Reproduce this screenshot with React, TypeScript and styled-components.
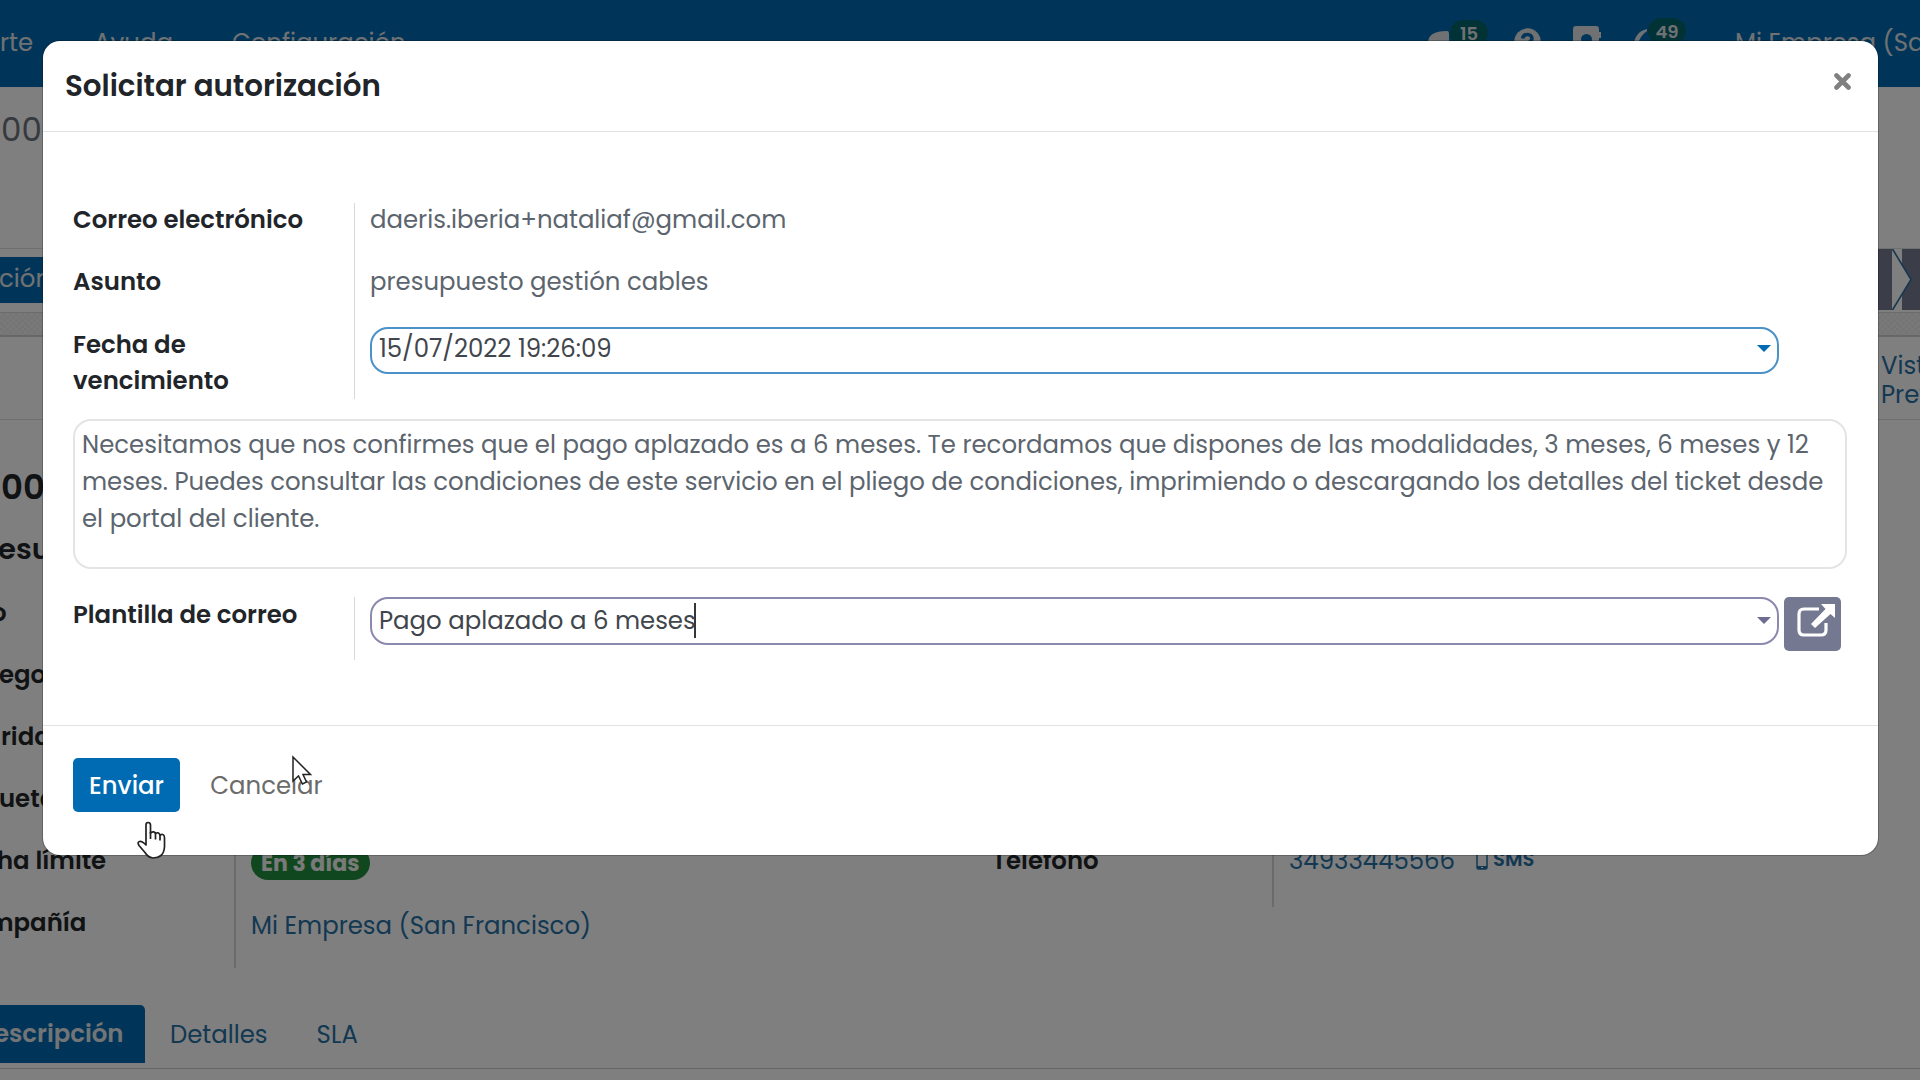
import React from "react";
import styled, { createGlobalStyle } from "styled-components";

const GlobalStyle = createGlobalStyle`
  * { box-sizing: border-box; }
  body {
    margin: 0;
    overflow: hidden;
    font-family: Poppins, Inter, "Open Sans", sans-serif;
    font-size: 24.4px;
    color: #212529;
  }
`;

const Screen = styled.div`
  position: relative;
  width: 1920px;
  height: 1080px;
  overflow: hidden;
  background: #fff;
`;

const Txt = styled.span<{ $ml?: number }>`
  margin-left: ${p => p.$ml ?? 0}px;
  white-space: nowrap;
`;

/* ---------- page behind the dialog ---------- */

const NavBar = styled.nav`
  display: flex;
  height: 87px;
  background: #006bb3;
  color: #e0e3e7;
  line-height: 86px;
`;
const NavMenu = styled.div`
  display: flex;
  flex: none;
  width: 1427px;
`;
const NavTools = styled.div`
  display: flex;
  align-items: flex-start;
  flex: none;
`;
const ToolIcon = styled.svg<{ $mt: number; $ml?: number }>`
  flex: none;
  margin-top: ${p => p.$mt}px;
  margin-left: ${p => p.$ml ?? 0}px;
`;
const Counter = styled.span<{ $mt: number; $ml: number }>`
  flex: none;
  width: 38px;
  height: 26px;
  margin-top: ${p => p.$mt}px;
  margin-left: ${p => p.$ml}px;
  border-radius: 13px;
  background: #00646c;
  font-size: 18px;
  font-weight: 600;
  line-height: 27px;
  text-align: center;
`;

const ControlPanel = styled.div`
  height: 162px;
  padding: 22px 0 0 1px;
  border-bottom: 1px solid #dcdfe2;
  font-size: 32.5px;
  line-height: 41px;
  color: #6c757d;
`;
const StatusRow = styled.div`
  display: flex;
  justify-content: space-between;
  height: 63px;
`;
const StatusButton = styled.div`
  width: 120px;
  height: 46px;
  margin-top: 8px;
  background: #006bb3;
  color: #e0e3e7;
  line-height: 43px;
`;
const Hatch = styled.div`
  height: 25px;
  border-top: 1px solid #d8d8d8;
  border-bottom: 2px solid #cfcfcf;
  background: repeating-conic-gradient(#ebebeb 0 25%, #f3f3f3 0 50%) 0 0 / 6px 6px;
`;
const PreviewStrip = styled.div`
  display: flex;
  justify-content: flex-end;
  height: 83px;
  padding-top: 14px;
  border-bottom: 1px solid #dcdfe2;
`;
const PreviewLink = styled.div`
  display: flex;
  flex-direction: column;
  width: 39px;
  overflow: hidden;
  color: #2670a4;
  line-height: 29px;
`;
const Sheet = styled.div`
  height: 585px;
`;
const RecordName = styled.div`
  height: 107px;
  padding: 46px 0 0 1px;
  font-size: 34px;
  font-weight: 600;
  line-height: 42px;
`;
const RecordTitle = styled.div`
  height: 55px;
  font-size: 29px;
  font-weight: 600;
  line-height: 44px;
`;
const Columns = styled.div`
  display: flex;
  align-items: flex-start;
`;
const FieldList = styled.div<{ $w: number; $pad?: number }>`
  width: ${p => p.$w}px;
  padding: 0 0 14px ${p => p.$pad ?? 0}px;
  font-weight: 600;
  line-height: 62px;
`;
const ValueList = styled.div<{ $w: number; $last?: number }>`
  display: flex;
  flex-direction: column;
  justify-content: flex-end;
  align-items: flex-start;
  width: ${p => p.$w}px;
  height: ${p => p.$last ?? 386}px;
  padding: 0 0 11px 15px;
  border-left: 2px solid #d4d6d8;
  color: #2670a4;
  line-height: 62px;
`;
const Row = styled.div`
  height: 62px;
`;
const Pill = styled.span`
  height: 34px;
  margin: 0 0 15px;
  padding: 0 10px;
  border-radius: 17px;
  background: #238f3e;
  color: #f4f4f4;
  font-size: 22px;
  font-weight: 700;
  line-height: 36px;
`;
const PhoneRow = styled.div`
  display: flex;
  align-items: center;
  height: 62px;
  margin-bottom: 4px;
`;
const Sms = styled.span`
  margin: -3px 0 0 5px;
  font-size: 19.5px;
  font-weight: 600;
`;
const Tabs = styled.div`
  display: flex;
  height: 64px;
  line-height: 60px;
  color: #2670a4;
  border-bottom: 1px solid #c9ccd0;
`;
const ActiveTab = styled.div`
  width: 145px;
  height: 58px;
  border-radius: 0 5px 0 0;
  background: #006bb3;
  color: #e6e9ec;
  font-weight: 600;
  line-height: 57px;
`;

/* ---------- dialog ---------- */

const Backdrop = styled.div`
  position: absolute;
  inset: 0;
  padding: 41px 42px 0 43px;
  background: rgba(0, 0, 0, 0.5);
`;
const Dialog = styled.section`
  height: 814px;
  border-radius: 17px;
  background: #fff;
  box-shadow: 0 0 0 1px rgba(0, 0, 0, 0.22);
`;
const DialogHeader = styled.header`
  display: flex;
  justify-content: space-between;
  height: 91px;
  padding: 26px 27px 0 22px;
  border-bottom: 1px solid #dfe1e4;
  font-size: 29.3px;
  font-weight: 600;
  line-height: 38px;
`;
const CloseIcon = styled.svg`
  margin-top: 6px;
`;
const DialogBody = styled.div`
  height: 593px;
  padding: 71px 31px 0 30px;
`;
const Group = styled.div<{ $h: number; $mt?: number }>`
  display: grid;
  grid-template-columns: 282px 1fr;
  height: ${p => p.$h}px;
  margin-top: ${p => p.$mt ?? 0}px;
`;
const Labels = styled.div`
  border-right: 1px solid #d5d8dc;
  font-weight: 600;
`;
const Values = styled.div`
  padding-left: 15px;
  color: #5c656e;
`;
const Line = styled.div<{ $h?: number; $gap?: number }>`
  height: ${p => p.$h ?? 34}px;
  margin-bottom: ${p => p.$gap ?? 28}px;
  line-height: ${p => p.$h ?? 34}px;
`;
const WrapLabel = styled.div`
  display: flex;
  flex-direction: column;
  line-height: 36px;
`;
const Field = styled.div<{ $color: string; $h: number; $lift?: number }>`
  display: flex;
  align-items: center;
  justify-content: space-between;
  width: 1409px;
  height: ${p => p.$h}px;
  padding: 0 6px ${p => p.$lift ?? 0}px 7px;
  border: 2px solid ${p => p.$color};
  border-radius: 18px;
  color: #41464c;
`;
const Triangle = styled.i<{ $color: string }>`
  border: 7px solid transparent;
  border-top: 7px solid ${p => p.$color};
  border-bottom: 0;
`;
const TextCaret = styled.i`
  width: 2px;
  height: 35px;
  margin-left: -2px;
  background: #33363a;
`;
const FieldText = styled.div`
  display: flex;
  align-items: center;
`;
const Message = styled.div`
  display: flex;
  flex-direction: column;
  height: 150px;
  margin-top: 20px;
  padding: 5px 7px 0;
  border: 2px solid #e3e4e6;
  border-radius: 18px;
  color: #5c656e;
  line-height: 37px;
`;
const SelectRow = styled.div`
  display: flex;
  gap: 5px;
`;
const OpenButton = styled.button`
  width: 57px;
  height: 54px;
  padding: 0;
  border: 0;
  border-radius: 5px;
  background: #747890;
`;
const DialogFooter = styled.footer`
  display: flex;
  height: 130px;
  padding: 32px 30px 0;
  border-top: 1px solid #dfe1e4;
`;
const Action = styled.button<{ $primary?: boolean }>`
  height: 54px;
  width: ${p => (p.$primary ? 107 : 145)}px;
  margin-left: ${p => (p.$primary ? 0 : 14)}px;
  padding: 0;
  border: 0;
  border-radius: 5px;
  background: ${p => (p.$primary ? "#006bb3" : "transparent")};
  color: ${p => (p.$primary ? "#fff" : "#6b6b6b")};
  font-family: inherit;
  font-size: 24.4px;
  font-weight: ${p => (p.$primary ? 500 : 400)};
  line-height: 51px;
`;
const Pointer = styled.svg<{ $x: number; $y: number }>`
  position: absolute;
  left: ${p => p.$x}px;
  top: ${p => p.$y}px;
`;

function Background() {
  return (
    <>
      <NavBar>
        <NavMenu>
          <Txt>rte</Txt>
          <Txt $ml={61}>Ayuda</Txt>
          <Txt $ml={59}>Configuración</Txt>
        </NavMenu>
        <NavTools>
          <ToolIcon $mt={31} $ml={1} width="21" height="20" viewBox="0 0 21 20">
            <path d="M0 12C0 4 6 0 19 0Q21 0 21 3V20H0Z" fill="#e0e3e7" />
          </ToolIcon>
          <Counter $mt={20} $ml={1}>15</Counter>
          <ToolIcon $mt={28} $ml={26} width="27" height="27" viewBox="0 0 27 27">
            <circle cx="13.5" cy="13.5" r="13.2" fill="#e0e3e7" />
            <path d="M8.7 10.5C9.5 5 18 5.300 18 10.500C18 14 13.500 13.500 13.500 17.500" fill="none" stroke="#006bb3" strokeWidth="3.600" />
          </ToolIcon>
          <ToolIcon $mt={26} $ml={32} width="29" height="30" viewBox="0 0 29 30">
            <path d="M3 0H23Q26 0 26 3V6H28V12H26V30H0V3Q0 0 3 0Z" fill="#e0e3e7" />
            <circle cx="13.500" cy="13.500" r="5.500" fill="#006bb3" />
          </ToolIcon>
          <ToolIcon $mt={29} $ml={32} width="15" height="26" viewBox="0 0 15 26">
            <path d="M13 0C4 2 0 9 0 16V26H4V15Q6 7 13 2Z" fill="#e0e3e7" />
          </ToolIcon>
          <Counter $mt={18} $ml={-1}>49</Counter>
          <Txt $ml={49}>Mi Empresa (San Francisco)</Txt>
        </NavTools>
      </NavBar>
      <ControlPanel>00</ControlPanel>
      <StatusRow>
        <StatusButton><Txt $ml={-1}>ción</Txt></StatusButton>
        <svg width="42" height="61" viewBox="0 0 42 61">
          <rect width="42" height="61" fill="#777b90" />
          <path d="M14 0H24V16L33 30.500L24 45V61H14Z" fill="#fff" />
          <path d="M14.500 0L33 30.500L14.500 61" fill="none" stroke="#2b6f9f" strokeWidth="1.600" />
        </svg>
      </StatusRow>
      <Hatch />
      <PreviewStrip>
        <PreviewLink><Txt>Vista</Txt><Txt>Previa</Txt></PreviewLink>
      </PreviewStrip>
      <Sheet>
        <RecordName>00</RecordName>
        <RecordTitle><Txt $ml={-2}>esu</Txt></RecordTitle>
        <Columns>
          <FieldList $w={234}>
            <Row><Txt $ml={-9}>o</Txt></Row>
            <Row><Txt $ml={-1}>ego</Txt></Row>
            <Row><Txt $ml={1}>rida</Txt></Row>
            <Row><Txt $ml={-1}>ueta</Txt></Row>
            <Row><Txt $ml={-3}>ha límite</Txt></Row>
            <Row><Txt $ml={-12}>mpañía</Txt></Row>
          </FieldList>
          <ValueList $w={743}>
            <Pill>En 3 días</Pill>
            <Row><Txt>Mi Empresa (San Francisco)</Txt></Row>
          </ValueList>
          <FieldList $w={295} $pad={15}>
            <Row /><Row /><Row /><Row />
            <Row><Txt>Teléfono</Txt></Row>
          </FieldList>
          <ValueList $w={500} $last={325}>
            <PhoneRow>
              <Txt>34933445566</Txt>
              <ToolIcon $mt={-2} $ml={21} width="12" height="20" viewBox="0 0 12 20">
                <rect x="1" y="1" width="10" height="18" rx="1.500" fill="none" stroke="#2670a4" strokeWidth="1.500" />
                <path d="M1 16H11V19H1Z" fill="#2670a4" />
                <path d="M5 17.500H7" stroke="#fff" />
              </ToolIcon>
              <Sms>SMS</Sms>
            </PhoneRow>
          </ValueList>
        </Columns>
      </Sheet>
      <Tabs>
        <ActiveTab><Txt $ml={-6}>escripción</Txt></ActiveTab>
        <Txt $ml={25}>Detalles</Txt>
        <Txt $ml={49}>SLA</Txt>
      </Tabs>
    </>
  );
}

export default function App() {
  return (
    <Screen>
      <GlobalStyle />
      <Background />
      <Backdrop>
        <Dialog>
          <DialogHeader>
            <Txt>Solicitar autorización</Txt>
            <CloseIcon width="17" height="17" viewBox="0 0 17 17">
              <path d="M2.500 2.500L14.500 14.500M14.500 2.500L2.500 14.500" stroke="#808080" strokeWidth="4.600" strokeLinecap="round" />
            </CloseIcon>
          </DialogHeader>
          <DialogBody>
            <Group $h={196}>
              <Labels>
                <Line><Txt>Correo electrónico</Txt></Line>
                <Line><Txt>Asunto</Txt></Line>
                <WrapLabel>
                  <Txt>Fecha de</Txt>
                  <Txt>vencimiento</Txt>
                </WrapLabel>
              </Labels>
              <Values>
                <Line><Txt>daeris.iberia+nataliaf@gmail.com</Txt></Line>
                <Line><Txt>presupuesto gestión cables</Txt></Line>
                <Field $color="#4a92c8" $h={47} $lift={4}>
                  <Txt>15/07/2022 19:26:09</Txt>
                  <Triangle $color="#006bb3" />
                </Field>
              </Values>
            </Group>
            <Message>
              <Txt>Necesitamos que nos confirmes que el pago aplazado es a 6 meses. Te recordamos que dispones de las modalidades, 3 meses, 6 meses y 12</Txt>
              <Txt>meses. Puedes consultar las condiciones de este servicio en el pliego de condiciones, imprimiendo o descargando los detalles del ticket desde</Txt>
              <Txt>el portal del cliente.</Txt>
            </Message>
            <Group $h={63} $mt={28}>
              <Labels><Line $h={35}><Txt>Plantilla de correo</Txt></Line></Labels>
              <Values>
                <SelectRow>
                  <Field $color="#8b89ae" $h={48} $lift={2}>
                    <FieldText><Txt>Pago aplazado a 6 meses</Txt><TextCaret /></FieldText>
                    <Triangle $color="#6d6c92" />
                  </Field>
                  <OpenButton>
                    <svg width="57" height="54" viewBox="0 0 57 54" fill="none">
                      <path d="M35 12H20Q15 12 15 17V33Q15 38 20 38H37Q42 38 42 33V26" stroke="#fff" strokeWidth="3.200" />
                      <path d="M37 7H51V21L46.500 17L31 31L27 27L41.500 12Z" fill="#fff" />
                    </svg>
                  </OpenButton>
                </SelectRow>
              </Values>
            </Group>
          </DialogBody>
          <DialogFooter>
            <Action $primary>Enviar</Action>
            <Action>Cancelar</Action>
          </DialogFooter>
        </Dialog>
      </Backdrop>
      <Pointer $x={291} $y={755} width="22" height="32" viewBox="0 0 22 32">
        <path d="M2 2V26L7.500 21L11.500 29L15.500 27L12 19.500H19.500Z" fill="#fff" stroke="#222" strokeWidth="1.500" />
      </Pointer>
      <Pointer $x={136} $y={821} width="31" height="39" viewBox="0 0 31 39">
        <path d="M10 24V4Q10 1.500 12 1.500Q14.500 1.500 14.500 4V12Q18 9.500 19.500 12.500Q22.500 10.500 24 14Q28 12 28.500 16.500V26Q28 32 25 34.500Q22 37 17 37Q12 36.500 9 31.500L3 24.500Q1 21 3.500 20.500Q6 20 10 24Z" fill="#fff" stroke="#222" strokeWidth="1.700" strokeLinejoin="round" />
        <path d="M14.500 11V18M19.500 12.500V18.500M24 14V19.500" stroke="#222" strokeWidth="1.700" />
      </Pointer>
    </Screen>
  );
}
